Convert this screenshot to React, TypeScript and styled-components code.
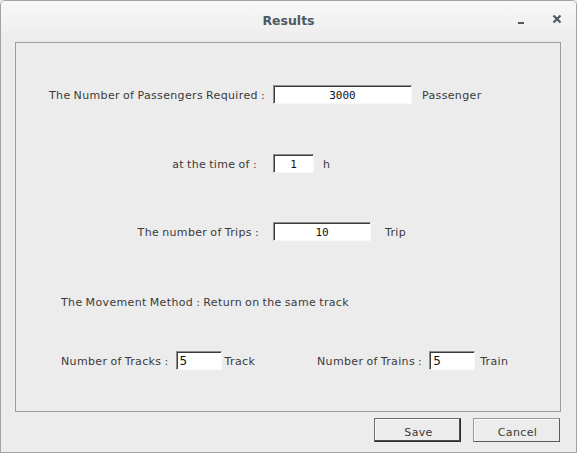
import React from "react";
import styled, { createGlobalStyle } from "styled-components";

const Global = createGlobalStyle`
  html, body { margin: 0; padding: 0; background: #ececec; }
  body { font-family: "DejaVu Sans", "Liberation Sans", sans-serif; }
  #root { width: 577px; height: 453px; }
`;

const Window = styled.div`
  box-sizing: border-box;
  width: 577px;
  height: 453px;
  border: 1px solid #a3a3a3;
  border-radius: 5px 5px 0 0;
  background: #ececec;
  display: flex;
  flex-direction: column;
  overflow: hidden;
`;

const TitleBar = styled.div`
  height: 41px;
  flex: none;
  background: linear-gradient(#f8f8f8, #ececec);
  display: flex;
  align-items: center;
  justify-content: center;
  position: relative;
`;

const Title = styled.div`
  font-weight: bold;
  font-size: 12.5px;
  color: #4b5a64;
  margin-top: -3px;
`;

const TitleButtons = styled.div`
  position: absolute;
  right: 14px;
  top: 12px;
  display: flex;
  gap: 27px;
  align-items: center;
  color: #4b5a64;
`;

const Content = styled.div`
  flex: 1;
  display: flex;
  flex-direction: column;
  padding: 0 15px 0 14px;
`;

const Panel = styled.div`
  box-sizing: border-box;
  height: 370px;
  border: 1px solid #9d9d9d;
  display: flex;
  flex-direction: column;
  color: #3a3a3a;
  font-size: 11px;
  letter-spacing: 0.35px;
  word-spacing: -0.75px;
`;

const CenterRow = styled.div<{ $top: number }>`
  display: flex;
  align-items: center;
  height: 19px;
  margin-top: ${(p) => p.$top}px;
`;

const RightLabel = styled.div<{ $gap: number }>`
  box-sizing: border-box;
  width: 257px;
  text-align: right;
  padding-right: ${(p) => p.$gap}px;
  padding-top: 2px;
  white-space: nowrap;
`;

const Field = styled.div<{ $w: number; $mono?: boolean; $center?: boolean }>`
  box-sizing: border-box;
  width: ${(p) => p.$w}px;
  height: 19px;
  background: #fff;
  border-top: 1px solid #8e8e8e;
  border-left: 1px solid #8e8e8e;
  border-right: 1px solid #f8f8f8;
  border-bottom: 1px solid #f8f8f8;
  box-shadow: inset 1px 1px 0 #3c3c3c;
  display: flex;
  align-items: center;
  justify-content: ${(p) => (p.$center ? "center" : "flex-start")};
  padding-left: ${(p) => (p.$center ? 0 : 3)}px;
  padding-top: 1px;
  font-family: ${(p) =>
    p.$mono ? '"DejaVu Sans Mono", "Liberation Mono", monospace' : '"DejaVu Sans", sans-serif'};
  font-size: ${(p) => (p.$mono ? 11 : 12)}px;
  letter-spacing: 0;
  color: #111;
  flex: none;
`;

const Unit = styled.div<{ $left: number }>`
  margin-left: ${(p) => p.$left}px;
  padding-top: 2px;
  white-space: nowrap;
`;

const TextRow = styled.div<{ $top: number }>`
  margin-top: ${(p) => p.$top}px;
  padding-left: 45px;
  white-space: nowrap;
`;

const BottomRow = styled.div`
  display: flex;
  align-items: center;
  height: 19px;
  margin-top: 42px;
  padding-left: 45px;
`;

const Group = styled.div<{ $width?: number }>`
  display: flex;
  align-items: center;
  width: ${(p) => (p.$width ? `${p.$width}px` : "auto")};
`;

const SmallLabel = styled.div`
  margin-right: 7px;
  padding-top: 2px;
  white-space: nowrap;
`;

const ButtonRow = styled.div`
  display: flex;
  justify-content: flex-end;
  gap: 12px;
  margin-top: 6px;
  padding-right: 1px;
`;

const Button = styled.button<{ $focused?: boolean }>`
  box-sizing: border-box;
  width: 87px;
  height: 24px;
  background: #ececec;
  font-family: "DejaVu Sans", sans-serif;
  font-size: 11px;
  letter-spacing: 0.35px;
  color: #3a3a3a;
  padding: 4px 0 0 2px;
  border-top: 1px solid ${(p) => (p.$focused ? "#6e6e6e" : "#9a9a9a")};
  border-left: 1px solid ${(p) => (p.$focused ? "#6e6e6e" : "#9a9a9a")};
  border-right: 1px solid ${(p) => (p.$focused ? "#2e2e2e" : "#5a5a5a")};
  border-bottom: 1px solid ${(p) => (p.$focused ? "#2e2e2e" : "#5a5a5a")};
  box-shadow: ${(p) =>
    p.$focused ? "inset -1px -1px 0 #4a4a4a, inset 1px 1px 0 #fafafa" : "inset 1px 1px 0 #fafafa"};
`;

export default function App() {
  return (
    <>
      <Global />
      <Window>
        <TitleBar>
          <Title>Results</Title>
          <TitleButtons>
            <svg width="8" height="12" viewBox="0 0 8 12">
              <rect x="1" y="9" width="6" height="2" fill="currentColor" />
            </svg>
            <svg width="10" height="10" viewBox="0 0 10 10">
              <path d="M1.5 1.5 L8.5 8.5 M8.5 1.5 L1.5 8.5" stroke="currentColor" strokeWidth="2.2" />
            </svg>
          </TitleButtons>
        </TitleBar>
        <Content>
          <Panel>
            <CenterRow $top={42}>
              <RightLabel $gap={8}>The Number of Passengers Required :</RightLabel>
              <Field $w={139} $mono $center>3000</Field>
              <Unit $left={10}>Passenger</Unit>
            </CenterRow>
            <CenterRow $top={50}>
              <RightLabel $gap={16}>at the time of :</RightLabel>
              <Field $w={41} $mono $center>1</Field>
              <Unit $left={9}>h</Unit>
            </CenterRow>
            <CenterRow $top={49}>
              <RightLabel $gap={14}>The number of Trips :</RightLabel>
              <Field $w={98} $mono $center>10</Field>
              <Unit $left={14}>Trip</Unit>
            </CenterRow>
            <TextRow $top={55}>The Movement Method : Return on the same track</TextRow>
            <BottomRow>
              <Group $width={256}>
                <SmallLabel>Number of Tracks :</SmallLabel>
                <Field $w={46}>5</Field>
                <Unit $left={3}>Track</Unit>
              </Group>
              <Group>
                <SmallLabel>Number of Trains :</SmallLabel>
                <Field $w={46}>5</Field>
                <Unit $left={5}>Train</Unit>
              </Group>
            </BottomRow>
          </Panel>
          <ButtonRow>
            <Button $focused>Save</Button>
            <Button>Cancel</Button>
          </ButtonRow>
        </Content>
      </Window>
    </>
  );
}
